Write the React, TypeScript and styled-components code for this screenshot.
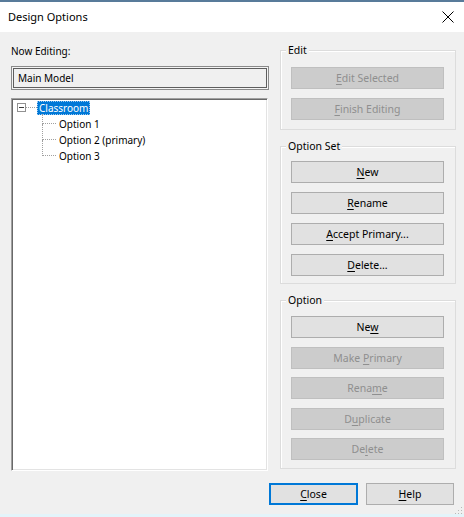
import React from "react";
import styled, { createGlobalStyle } from "styled-components";

const GlobalStyle = createGlobalStyle`
  html, body {
    margin: 0;
    padding: 0;
    background: #f0f0f0;
  }
  body {
    font-family: "Noto Sans", "Open Sans", sans-serif;
    font-size: 10px;
    color: #000;
  }
`;

// #region Window chrome
const Window = styled.div`
  width: 464px;
  height: 517px;
  display: flex;
  flex-direction: column;
  background: #f0f0f0;
  overflow: hidden;
`;

const TopEdge = styled.div`
  height: 2px;
  background: #587b9a;
`;

const TitleBar = styled.div`
  height: 30px;
  background: #ffffff;
  display: flex;
  align-items: center;
  justify-content: space-between;
  padding: 0 9px 0 8px;
`;

const Title = styled.span`
  font-size: 11px;
  line-height: 16px;
`;

const CloseIcon = () => (
  <svg width="14" height="14" viewBox="0 0 14 14">
    <path d="M1.5 1.5 L12.5 12.5 M12.5 1.5 L1.5 12.5" stroke="#000" strokeWidth="1" fill="none" />
  </svg>
);

const BottomEdge = styled.div`
  height: 3px;
  margin-top: auto;
  background: #e3f4fa;
`;
// #endregion

// #region Dialog body
const Body = styled.div`
  display: flex;
  gap: 12px;
  padding: 0 0 0 11px;
`;

const LeftColumn = styled.div`
  width: 257px;
  display: flex;
  flex-direction: column;
  padding-top: 11px;
`;

const FieldLabel = styled.div`
  line-height: 16px;
  margin-bottom: 7px;
`;

const ReadOnlyBox = styled.div`
  height: 24px;
  width: 258px;
  box-sizing: border-box;
  border: 1px solid #8a8a8a;
  box-shadow: inset 0 0 0 1px #f4f4f4, inset 0 0 0 2px #5e5e5e;
  background: #f0f0f0;
  display: flex;
  align-items: center;
  padding-left: 6px;
  margin-bottom: 8px;
`;

const TreeBox = styled.div`
  height: 373px;
  box-sizing: border-box;
  background: #ffffff;
  border-top: 1px solid #a0a0a0;
  border-left: 1px solid #a0a0a0;
  border-right: 1px solid #ffffff;
  border-bottom: 1px solid #ffffff;
  box-shadow: inset 1px 1px 0 #696969, inset -1px -1px 0 #e3e3e3;
  padding: 1px 0 0 5px;
`;

const TreeRow = styled.div<{ $depth: number }>`
  position: relative;
  height: 16px;
  display: flex;
  align-items: center;
  padding-left: ${(p) => (p.$depth === 0 ? 20 : 40)}px;
`;

const Expander = styled.span`
  position: absolute;
  left: 0;
  top: 3px;
  width: 9px;
  height: 9px;
  box-sizing: border-box;
  border: 1px solid #919191;
  background: #fff;
  &::after {
    content: "";
    position: absolute;
    left: 1px;
    top: 3px;
    width: 5px;
    height: 1px;
    background: #3a3a3a;
  }
`;

const HLine = styled.span<{ $from: number; $to: number }>`
  position: absolute;
  top: 7px;
  left: ${(p) => p.$from}px;
  width: ${(p) => p.$to - p.$from}px;
  border-top: 1px dotted #a0a0a0;
`;

const VLine = styled.span<{ $top: number; $height: number }>`
  position: absolute;
  left: 25px;
  top: ${(p) => p.$top}px;
  height: ${(p) => p.$height}px;
  border-left: 1px dotted #a0a0a0;
`;

const NodeLabel = styled.span<{ $selected?: boolean }>`
  line-height: 14px;
  padding: 0 2px;
  white-space: nowrap;
  background: ${(p) => (p.$selected ? "#0078d7" : "transparent")};
  color: ${(p) => (p.$selected ? "#fff" : "#000")};
  outline: ${(p) => (p.$selected ? "1px dotted #9cc8f0" : "none")};
  outline-offset: -1px;
`;
// #endregion

// #region Group boxes and buttons
const RightColumn = styled.div`
  width: 176px;
  display: flex;
  flex-direction: column;
  gap: 16px;
  padding-top: 18px;
`;

const GroupBox = styled.div<{ $padTop: number; $padBottom: number; $gap: number }>`
  position: relative;
  border: 1px solid #dcdcdc;
  box-shadow: inset 1px 1px 0 #ffffff;
  padding: ${(p) => `${p.$padTop}px 11px ${p.$padBottom}px 10px`};
  display: flex;
  flex-direction: column;
  gap: ${(p) => p.$gap}px;
`;

const GroupTitle = styled.span`
  position: absolute;
  top: -9px;
  left: 5px;
  padding: 0 2px;
  line-height: 16px;
  font-size: 10.5px;
  background: #f0f0f0;
`;

const Button = styled.div<{ $disabled?: boolean; $default?: boolean; $width?: number }>`
  height: 22px;
  width: ${(p) => (p.$width ? `${p.$width}px` : "auto")};
  box-sizing: border-box;
  display: flex;
  align-items: center;
  justify-content: center;
  font-size: 10.5px;
  background: ${(p) => (p.$disabled ? "#cccccc" : "#e1e1e1")};
  border: 1px solid
    ${(p) => (p.$default ? "#0078d7" : p.$disabled ? "#bfbfbf" : "#adadad")};
  box-shadow: ${(p) => (p.$default ? "inset 0 0 0 1px #0078d7" : "none")};
  color: ${(p) => (p.$disabled ? "#8f8f8f" : "#000")};
  white-space: nowrap;
  u {
    text-decoration-thickness: 1px;
    text-underline-offset: 2px;
  }
`;

const Footer = styled.div`
  display: flex;
  justify-content: flex-end;
  gap: 8px;
  padding: 12px 10px 0 0;
  position: relative;
`;

const Grip = styled.svg`
  position: absolute;
  right: 1px;
  bottom: -10px;
`;
// #endregion

const Mn = ({ text, at }: { text: string; at: number }) => (
  <span>
    {text.slice(0, at)}
    <u>{text[at]}</u>
    {text.slice(at + 1)}
  </span>
);

interface ActionItem {
  label: string;
  key: number;
  disabled?: boolean;
}

const editActions: ActionItem[] = [
  { label: "Edit Selected", key: 0, disabled: true },
  { label: "Finish Editing", key: 0, disabled: true },
];

const optionSetActions: ActionItem[] = [
  { label: "New", key: 0 },
  { label: "Rename", key: 0 },
  { label: "Accept Primary...", key: 0 },
  { label: "Delete...", key: 0 },
];

const optionActions: ActionItem[] = [
  { label: "New", key: 2 },
  { label: "Make Primary", key: 5, disabled: true },
  { label: "Rename", key: 4, disabled: true },
  { label: "Duplicate", key: 1, disabled: true },
  { label: "Delete", key: 2, disabled: true },
];

const options = ["Option 1", "Option 2 (primary)", "Option 3"];

const Group = ({
  title,
  items,
  padTop,
  padBottom,
  gap,
}: {
  title: string;
  items: ActionItem[];
  padTop: number;
  padBottom: number;
  gap: number;
}) => (
  <GroupBox $padTop={padTop} $padBottom={padBottom} $gap={gap}>
    <GroupTitle>{title}</GroupTitle>
    {items.map((item) => (
      <Button key={item.label} $disabled={item.disabled}>
        <Mn text={item.label} at={item.key} />
      </Button>
    ))}
  </GroupBox>
);

export default function App() {
  return (
    <>
      <GlobalStyle />
      <Window>
        <TopEdge />
        <TitleBar>
          <Title>Design Options</Title>
          <CloseIcon />
        </TitleBar>

        <Body>
          <LeftColumn>
            <FieldLabel>Now Editing:</FieldLabel>
            <ReadOnlyBox>Main Model</ReadOnlyBox>
            <TreeBox>
              <TreeRow $depth={0}>
                <Expander />
                <HLine $from={9} $to={20} />
                <NodeLabel $selected>Classroom</NodeLabel>
              </TreeRow>
              {options.map((name, i) => (
                <TreeRow $depth={1} key={name}>
                  <VLine $top={i === 0 ? -2 : -8} $height={i === 0 ? 10 : 16} />
                  <HLine $from={26} $to={39} />
                  <NodeLabel>{name}</NodeLabel>
                </TreeRow>
              ))}
            </TreeBox>
          </LeftColumn>

          <RightColumn>
            <Group title="Edit" items={editActions} padTop={16} padBottom={9} gap={9} />
            <Group title="Option Set" items={optionSetActions} padTop={14} padBottom={7} gap={9} />
            <Group title="Option" items={optionActions} padTop={15} padBottom={8} gap={8.5} />
          </RightColumn>
        </Body>

        <Footer>
          <Button $default $width={89}>
            <Mn text="Close" at={0} />
          </Button>
          <Button $width={88}>
            <Mn text="Help" at={0} />
          </Button>
          <Grip width="8" height="8" viewBox="0 0 8 8">
            <rect x="6" y="0" width="1" height="1" fill="#b8b8b8" />
            <rect x="3" y="3" width="1" height="1" fill="#b8b8b8" />
            <rect x="6" y="3" width="1" height="1" fill="#b8b8b8" />
            <rect x="0" y="6" width="1" height="1" fill="#b8b8b8" />
            <rect x="3" y="6" width="1" height="1" fill="#b8b8b8" />
            <rect x="6" y="6" width="1" height="1" fill="#b8b8b8" />
          </Grip>
        </Footer>
        <BottomEdge />
      </Window>
    </>
  );
}
